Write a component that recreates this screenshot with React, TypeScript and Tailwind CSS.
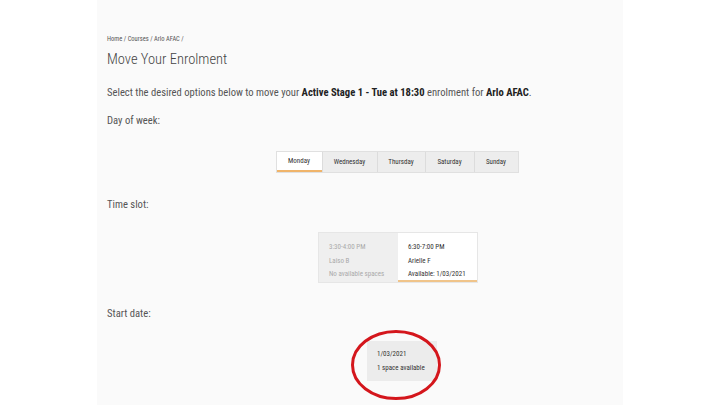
import React from "react";

const font = { fontFamily: "'Liberation Sans Narrow', 'Roboto Condensed', Roboto, sans-serif" };

export default function App() {
  const days = [
    { name: "Monday", w: "w-[45px]", active: true },
    { name: "Wednesday", w: "w-[55px]" },
    { name: "Thursday", w: "w-[48px]" },
    { name: "Saturday", w: "w-[49px]" },
    { name: "Sunday", w: "w-[44px]" },
  ];
  return (
    <div className="w-[720px] h-[405px] bg-white flex justify-center overflow-hidden" style={font}>
      <div className="w-[526px] h-full bg-[#fafafa] pl-[10px] pt-[34px] text-[#555]">
        <div className="text-[6.5px] leading-[10px] text-[#555]">Home / Courses / Arlo AFAC /</div>
        <h1 className="text-[14.5px] leading-[20px] font-light text-[#444] mt-[6px]">Move Your Enrolment</h1>
        <p className="text-[10.6px] leading-[14px] mt-[16px]">
          Select the desired options below to move your <b className="font-bold text-[#222]">Active Stage 1 - Tue at 18:30</b> enrolment for <b className="font-bold text-[#222]">Arlo AFAC</b>.
        </p>
        <div className="text-[10.6px] leading-[14px] mt-[14px]">Day of week:</div>
        <div className="flex justify-center pl-[64px] mt-[23px]">
          <div className="flex h-[22px] border border-[#e0e0e0]">
            {days.map((d) => (
              <div
                key={d.name}
                className={
                  "flex items-center justify-center text-[7px] text-[#333] " +
                  d.w +
                  (d.active
                    ? " bg-white border-b-2 border-b-[#f0b46a]"
                    : " bg-[#ededed] border-l border-l-[#dcdcdc]")
                }
              >
                {d.name}
              </div>
            ))}
          </div>
        </div>
        <div className="text-[10.6px] leading-[14px] mt-[25px]">Time slot:</div>
        <div className="flex justify-center pl-[66px] mt-[20px]">
          <div className="flex h-[51px] border border-[#e6e6e6]">
            <div className="w-[79px] bg-[#efefef] pl-[10px] pt-[8px] text-[7px] leading-[13.5px] text-[#aaa]">
              <div>3:30-4:00 PM</div>
              <div>Laiso B</div>
              <div>No available spaces</div>
            </div>
            <div className="w-[79px] bg-white pl-[10px] pt-[8px] text-[7px] leading-[13.5px] text-[#333] border-b-2 border-b-[#f0c48a]">
              <div>6:30-7:00 PM</div>
              <div>Arielle F</div>
              <div>Available: 1/03/2021</div>
            </div>
          </div>
        </div>
        <div className="text-[10.6px] leading-[14px] mt-[24px]">Start date:</div>
        <div className="flex justify-center pl-[74px] mt-[20px]">
          <div className="relative">
            <div className="w-[70px] h-[40px] bg-[#ececec] pl-[10px] pt-[7px] text-[7px] leading-[13.5px] text-[#333]">
              <div>1/03/2021</div>
              <div>1 space available</div>
            </div>
            <svg className="absolute left-[-17px] top-[-12px]" width="92" height="72" viewBox="0 0 92 72">
              <ellipse cx="46" cy="36" rx="43.5" ry="33.5" fill="none" stroke="#d4161c" strokeWidth="3" />
            </svg>
          </div>
        </div>
      </div>
    </div>
  );
}
